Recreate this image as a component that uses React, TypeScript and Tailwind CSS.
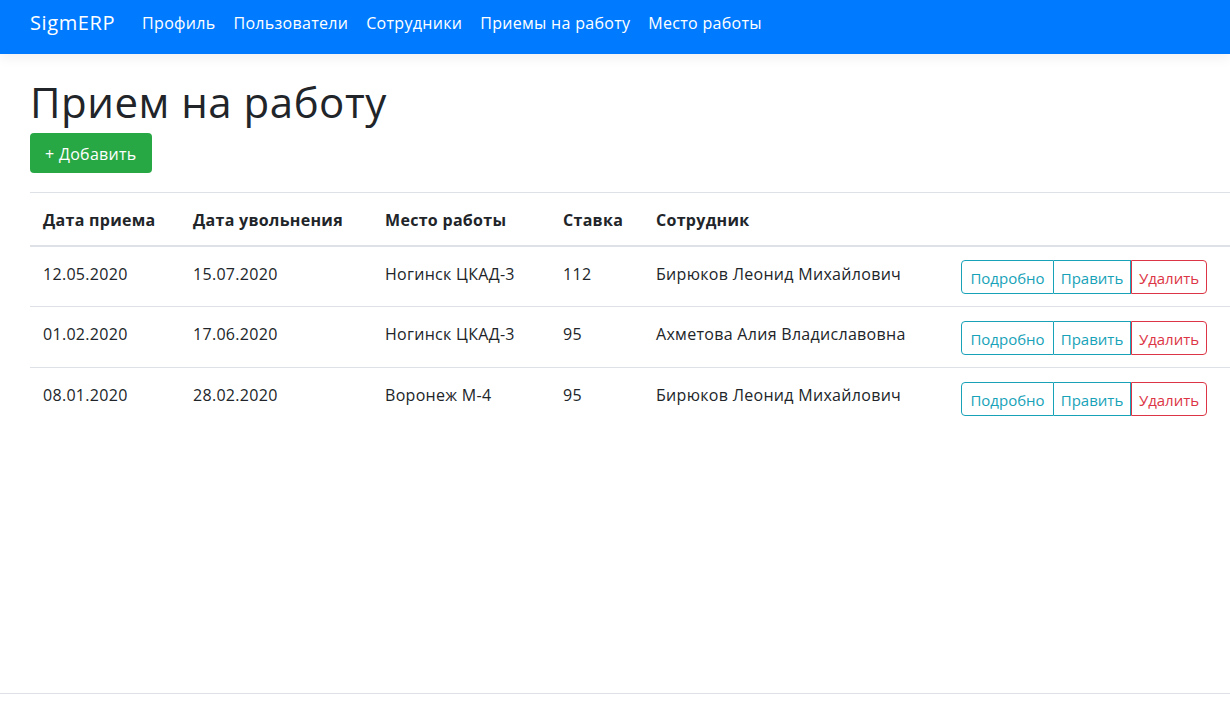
import React from "react";

const rows = [
  ["12.05.2020", "15.07.2020", "Ногинск ЦКАД-3", "112", "Бирюков Леонид Михайлович"],
  ["01.02.2020", "17.06.2020", "Ногинск ЦКАД-3", "95", "Ахметова Алия Владиславовна"],
  ["08.01.2020", "28.02.2020", "Воронеж М-4", "95", "Бирюков Леонид Михайлович"],
];

const links = ["Профиль", "Пользователи", "Сотрудники", "Приемы на работу", "Место работы"];

export default function App() {
  return (
    <div className="min-h-[709px] bg-white text-[#212529] flex flex-col tracking-[0.3px]" style={{ fontFamily: '"Open Sans", "Noto Sans", sans-serif' }}>
      <nav className="h-[54px] bg-[#007bff] flex items-center pl-[30px] pb-[8px] shadow-[0_4px_12px_rgba(0,0,0,0.06)] relative z-10">
        <span className="text-white text-[20px] mr-[27px] leading-none tracking-[0.6px]">SigmERP</span>
        <div className="flex gap-[18px]">
          {links.map((l) => (
            <span key={l} className="text-white text-[16px]">{l}</span>
          ))}
        </div>
      </nav>
      <main className="flex-1 pl-[30px] pt-[22px]">
        <h1 className="text-[42px] leading-[52px] font-medium tracking-[0.5px]">Прием на работу</h1>
        <button className="mt-[5px] h-[40px] px-[15px] pt-[2px] rounded-[4px] bg-[#28a745] text-white text-[16px]">+ Добавить</button>
        <table className="mt-[19px] w-[1200px] border-collapse text-[16px]">
          <thead>
            <tr className="border-t border-[#dee2e6] border-b-2">
              <th className="h-[53px] pt-[2px] text-left font-bold pl-[13px] w-[151px]">Дата приема</th>
              <th className="text-left pt-[2px] font-bold pl-[12px] w-[192px]">Дата увольнения</th>
              <th className="text-left pt-[2px] font-bold pl-[12px] w-[178px]">Место работы</th>
              <th className="text-left pt-[2px] font-bold pl-[12px] w-[93px]">Ставка</th>
              <th className="text-left pt-[2px] font-bold pl-[12px] w-[305px]">Сотрудник</th>
              <th></th>
            </tr>
          </thead>
          <tbody>
            {rows.map((r, i) => (
              <tr key={i} className={i > 0 ? "border-t border-[#dee2e6]" : ""}>
                {r.map((c, j) => (
                  <td key={j} className={"h-[61px] align-top pt-[15px] " + (j === 0 ? "pl-[13px]" : "pl-[12px]")}>{c}</td>
                ))}
                <td className="align-middle pl-[12px] pt-[2px]">
                  <div className="flex text-[15px] h-[34px] tracking-normal">
                    <span className="w-[93px] pt-[2px] flex items-center justify-center border border-[#17a2b8] text-[#17a2b8] rounded-l-[4px]">Подробно</span>
                    <span className="w-[77px] pt-[2px] flex items-center justify-center border border-l-0 border-[#17a2b8] text-[#17a2b8]">Править</span>
                    <span className="w-[76px] pt-[2px] flex items-center justify-center border border-[#dc3545] text-[#dc3545] rounded-r-[4px]">Удалить</span>
                  </div>
                </td>
              </tr>
            ))}
          </tbody>
        </table>
      </main>
      <footer className="h-[16px] border-t border-[#dee2e6] mb-0"></footer>
    </div>
  );
}
